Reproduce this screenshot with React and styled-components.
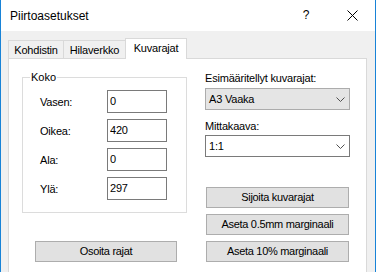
import styled, { createGlobalStyle } from "styled-components";

const GlobalStyle = createGlobalStyle`
  body {
    margin: 0;
    font-family: "Liberation Sans", Arial, sans-serif;
    font-size: 11px;
    color: #000;
  }
  * {
    box-sizing: border-box;
  }
`;

function Chevron() {
  return (
    <svg width="9" height="5" viewBox="0 0 9 5">
      <polyline
        points="0.5,0.5 4.5,4.5 8.5,0.5"
        fill="none"
        stroke="#505050"
        strokeWidth="1"
      />
    </svg>
  );
}

function CloseIcon() {
  return (
    <svg width="11" height="11" viewBox="0 0 11 11">
      <path d="M0.5 0.5 L10.5 10.5 M10.5 0.5 L0.5 10.5" stroke="#000" strokeWidth="1" />
    </svg>
  );
}

const fields = [
  { label: "Vasen:", value: "0" },
  { label: "Oikea:", value: "420" },
  { label: "Ala:", value: "0" },
  { label: "Ylä:", value: "297" },
];

function App() {
  return (
    <>
      <GlobalStyle />
      <Window>
        <TitleBar>
          <Title>Piirtoasetukset</Title>
          <CaptionButtons>
            <CaptionButton>?</CaptionButton>
            <CaptionButton>
              <CloseIcon />
            </CaptionButton>
          </CaptionButtons>
        </TitleBar>
        <Body>
          <TabStrip>
            <Tab $width={56}>Kohdistin</Tab>
            <Tab $width={63}>Hilaverkko</Tab>
            <Tab $width={62} $active>
              Kuvarajat
            </Tab>
          </TabStrip>
          <Panel>
            <LeftColumn>
              <GroupBox>
                <Legend>Koko</Legend>
                {fields.map((f) => (
                  <FieldRow key={f.label}>
                    <FieldLabel>{f.label}</FieldLabel>
                    <TextBox readOnly value={f.value} />
                  </FieldRow>
                ))}
              </GroupBox>
              <Button $width={142} $offset={13} $top={28}>
                Osoita rajat
              </Button>
            </LeftColumn>
            <RightColumn>
              <ComboLabel>Esimääritellyt kuvarajat:</ComboLabel>
              <Combo $readonly>
                <span>A3 Vaaka</span>
                <Chevron />
              </Combo>
              <ComboLabel $top={9}>Mittakaava:</ComboLabel>
              <Combo>
                <span>1:1</span>
                <Chevron />
              </Combo>
              <ButtonStack>
                <Button $width={143} $offset={1}>
                  Sijoita kuvarajat
                </Button>
                <Button $width={143} $offset={1}>
                  Aseta 0.5mm marginaali
                </Button>
                <Button $width={143} $offset={1}>
                  Aseta 10% marginaali
                </Button>
              </ButtonStack>
            </RightColumn>
          </Panel>
        </Body>
      </Window>
    </>
  );
}

const Window = styled.div`
  width: 376px;
  height: 272px;
  overflow: hidden;
  display: flex;
  flex-direction: column;
  background: #f0f0f0;
  border-left: 1px solid #1883d7;
  border-right: 1px solid #1883d7;
`;

const TitleBar = styled.div`
  height: 31px;
  flex-shrink: 0;
  background: #fff;
  display: flex;
  align-items: center;
  justify-content: space-between;
  padding-left: 9px;
`;

const Title = styled.div`
  font-size: 12px;
  margin-top: 1px;
`;

const CaptionButtons = styled.div`
  display: flex;
  height: 100%;
`;

const CaptionButton = styled.div`
  width: 46px;
  height: 100%;
  display: flex;
  align-items: center;
  justify-content: center;
  font-size: 12px;
  padding-bottom: 1px;
`;

const Body = styled.div`
  flex: 1;
  display: flex;
  flex-direction: column;
  padding: 0 8px 0 7px;
`;

const TabStrip = styled.div`
  height: 27px;
  display: flex;
  align-items: flex-end;
`;

const Tab = styled.div`
  position: relative;
  width: ${(p) => p.$width}px;
  height: ${(p) => (p.$active ? 21 : 18)}px;
  margin-left: -1px;
  margin-bottom: ${(p) => (p.$active ? -1 : 0)}px;
  z-index: ${(p) => (p.$active ? 2 : 1)};
  background: ${(p) => (p.$active ? "#fff" : "#f0f0f0")};
  border: 1px solid #d9d9d9;
  border-bottom: none;
  display: flex;
  justify-content: center;
  align-items: ${(p) => (p.$active ? "flex-start" : "center")};
  padding-top: ${(p) => (p.$active ? 3 : 0)}px;
  letter-spacing: -0.2px;

  &:first-child {
    margin-left: 0;
  }
`;

const Panel = styled.div`
  flex: 1;
  min-height: 240px;
  background: #fff;
  border: 1px solid #d9d9d9;
  display: flex;
  gap: 18px;
  padding: 12px 0 0 13px;
`;

const LeftColumn = styled.div`
  width: 165px;
  margin-top: 6px;
  display: flex;
  flex-direction: column;
`;

const GroupBox = styled.div`
  position: relative;
  height: 136px;
  border: 1px solid #dcdcdc;
  padding: 12px 0 0 17px;
  display: flex;
  flex-direction: column;
  gap: 6px;
`;

const Legend = styled.span`
  position: absolute;
  top: -8px;
  left: 7px;
  padding: 0 1px;
  line-height: 14px;
  background: #fff;
`;

const FieldRow = styled.div`
  display: flex;
  align-items: center;
  height: 23px;
`;

const FieldLabel = styled.span`
  width: 67px;
  letter-spacing: -0.2px;
`;

const TextBox = styled.input`
  width: 60px;
  height: 23px;
  border: 1px solid #7a7a7a;
  padding: 0 2px 2px 2px;
  font-family: "Liberation Sans", Arial, sans-serif;
  font-size: 11px;
  color: #000;
  outline: none;
  letter-spacing: -0.2px;
`;

const Button = styled.div`
  width: ${(p) => p.$width}px;
  height: 21px;
  margin-left: ${(p) => p.$offset || 0}px;
  margin-top: ${(p) => p.$top || 0}px;
  background: #e1e1e1;
  border: 1px solid #adadad;
  display: flex;
  align-items: center;
  justify-content: center;
  letter-spacing: -0.3px;
  padding-bottom: 1px;
`;

const RightColumn = styled.div`
  width: 145px;
  display: flex;
  flex-direction: column;
`;

const ComboLabel = styled.div`
  line-height: 14px;
  margin-top: ${(p) => p.$top || 0}px;
  margin-bottom: ${(p) => (p.$top ? 2 : 3)}px;
  letter-spacing: -0.2px;
`;

const Combo = styled.div`
  height: 22px;
  display: flex;
  align-items: center;
  justify-content: space-between;
  padding: 0 4px 0 3px;
  background: ${(p) => (p.$readonly ? "#e5e5e5" : "#fff")};
  border: 1px solid ${(p) => (p.$readonly ? "#acacac" : "#7a7a7a")};
  letter-spacing: -0.2px;
`;

const ButtonStack = styled.div`
  margin-top: 30px;
  display: flex;
  flex-direction: column;
  gap: 6px;
`;

export default App;
